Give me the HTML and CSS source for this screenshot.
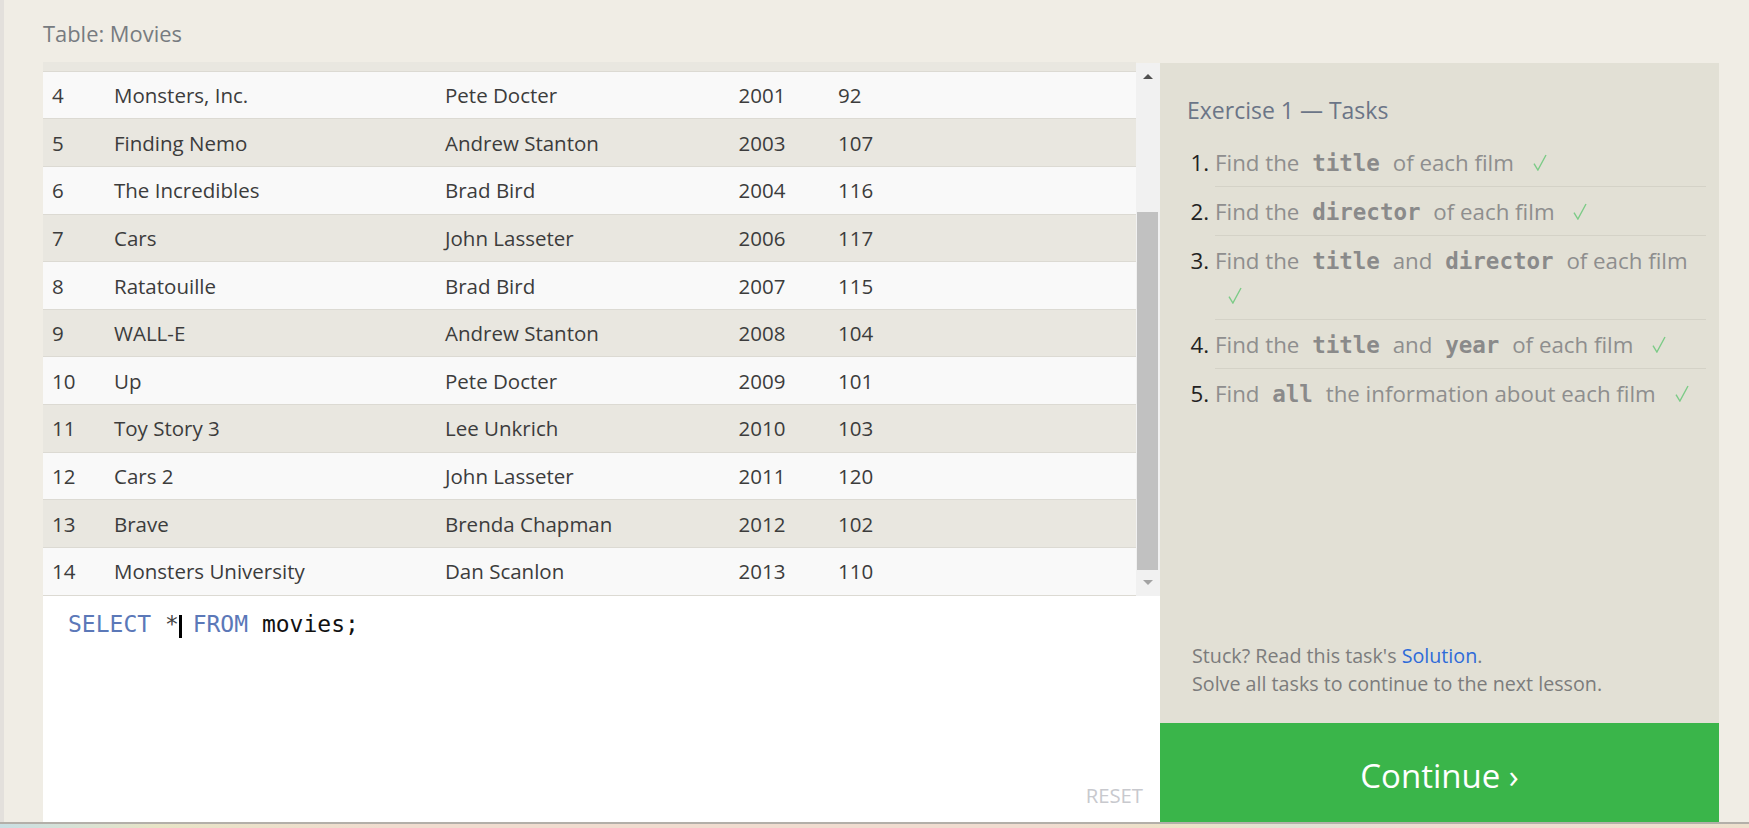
FILE: index.html
```html
<!DOCTYPE html>
<html lang="en">
<head>
<meta charset="utf-8">
<title>SQL Lesson - Movies</title>
<link rel="stylesheet" href="styles.css">
</head>
<body>
<div class="page">
  <div class="body-row">
    <div class="edge"></div>
    <div class="main">
      <div class="table-title">Table: Movies</div>
      <div class="workspace">
        <div class="left-col">
          <div class="table-wrap">
            <div class="viewport">
              <div class="row even peek"></div>
              <div class="row odd"><span>4</span><span>Monsters, Inc.</span><span>Pete Docter</span><span>2001</span><span>92</span></div>
              <div class="row even"><span>5</span><span>Finding Nemo</span><span>Andrew Stanton</span><span>2003</span><span>107</span></div>
              <div class="row odd"><span>6</span><span>The Incredibles</span><span>Brad Bird</span><span>2004</span><span>116</span></div>
              <div class="row even"><span>7</span><span>Cars</span><span>John Lasseter</span><span>2006</span><span>117</span></div>
              <div class="row odd"><span>8</span><span>Ratatouille</span><span>Brad Bird</span><span>2007</span><span>115</span></div>
              <div class="row even"><span>9</span><span>WALL-E</span><span>Andrew Stanton</span><span>2008</span><span>104</span></div>
              <div class="row odd"><span>10</span><span>Up</span><span>Pete Docter</span><span>2009</span><span>101</span></div>
              <div class="row even"><span>11</span><span>Toy Story 3</span><span>Lee Unkrich</span><span>2010</span><span>103</span></div>
              <div class="row odd"><span>12</span><span>Cars 2</span><span>John Lasseter</span><span>2011</span><span>120</span></div>
              <div class="row even"><span>13</span><span>Brave</span><span>Brenda Chapman</span><span>2012</span><span>102</span></div>
              <div class="row odd"><span>14</span><span>Monsters University</span><span>Dan Scanlon</span><span>2013</span><span>110</span></div>
            </div>
            <div class="scrollbar">
              <div class="sb-btn"><span class="arrow-up"></span></div>
              <div class="sb-track"><div class="sb-thumb"></div></div>
              <div class="sb-btn"><span class="arrow-down"></span></div>
            </div>
          </div>
          <div class="editor">
            <div class="code-line"><span class="kw">SELECT</span> <span class="op">*</span><span class="cursor"></span> <span class="kw">FROM</span> movies;</div>
            <div class="editor-foot"><span class="reset">RESET</span></div>
          </div>
        </div>
        <div class="right-col">
          <div class="tasks-panel">
            <h3 class="tasks-heading">Exercise 1 — Tasks</h3>
            <ol class="tasks">
              <li>Find the <code>title</code> of each film <span class="check"><svg width="14" height="17" viewBox="0 0 14 17"><path d="M1 9.6 L4.9 16 L13 1" fill="none" stroke="#7ccb87" stroke-width="1.4"/></svg></span></li>
              <li>Find the <code>director</code> of each film <span class="check"><svg width="14" height="17" viewBox="0 0 14 17"><path d="M1 9.6 L4.9 16 L13 1" fill="none" stroke="#7ccb87" stroke-width="1.4"/></svg></span></li>
              <li>Find the <code>title</code> and <code>director</code> of each film <span class="check"><svg width="14" height="17" viewBox="0 0 14 17"><path d="M1 9.6 L4.9 16 L13 1" fill="none" stroke="#7ccb87" stroke-width="1.4"/></svg></span></li>
              <li>Find the <code>title</code> and <code>year</code> of each film <span class="check"><svg width="14" height="17" viewBox="0 0 14 17"><path d="M1 9.6 L4.9 16 L13 1" fill="none" stroke="#7ccb87" stroke-width="1.4"/></svg></span></li>
              <li>Find <code>all</code> the information about each film <span class="check"><svg width="14" height="17" viewBox="0 0 14 17"><path d="M1 9.6 L4.9 16 L13 1" fill="none" stroke="#7ccb87" stroke-width="1.4"/></svg></span></li>
            </ol>
            <div class="stuck">
              <div>Stuck? Read this task's <a class="solution" href="#">Solution</a>.</div>
              <div>Solve all tasks to continue to the next lesson.</div>
            </div>
          </div>
          <div class="continue">Continue ›</div>
        </div>
      </div>
    </div>
  </div>
  <div class="bottom-strip"></div>
</div>
</body>
</html>
```

FILE: styles.css
```css
* { box-sizing: border-box; }
html, body { margin: 0; padding: 0; }
body {
  width: 1749px;
  height: 828px;
  overflow: hidden;
  background: #f0ede5;
  font-family: "Open Sans", "Noto Sans", sans-serif;
}
.page { display: flex; flex-direction: column; height: 828px; }
.body-row { display: flex; height: 822px; flex: none; }
.edge { width: 4px; flex: none; background: #e3e0dc; }
.main { flex: 1; padding-left: 39px; display: flex; flex-direction: column; min-width: 0; }

.table-title {
  font-size: 21.9px;
  line-height: 30px;
  color: #777b80;
  padding-top: 19px;
  margin-bottom: 13px;
  flex: none;
}

.workspace { display: flex; flex: 1; min-height: 0; }
.left-col { width: 1117px; flex: none; display: flex; flex-direction: column; }

.table-wrap { display: flex; height: 533.7px; flex: none; }
.viewport { width: 1092.5px; flex: none; overflow: hidden; }
.row {
  display: grid;
  grid-template-columns: 62px 331px 293.5px 99.5px 1fr;
  align-items: center;
  height: 47.64px;
  border-bottom: 1px solid #dcdad3;
  font-size: 20.5px;
  color: #3c3c3c;
}
.row > span { padding-left: 9px; white-space: nowrap; }
.row.odd { background: #f9f9f9; }
.row.even { background: #e9e7e0; }
.row.peek { height: 9.7px; }

.scrollbar {
  width: 24.5px;
  flex: none;
  margin-top: 1px;
  background: #f1f1f1;
  display: flex;
  flex-direction: column;
}
.sb-btn { height: 26px; flex: none; display: flex; align-items: center; justify-content: center; }
.arrow-up {
  width: 0; height: 0;
  border-left: 5.5px solid transparent;
  border-right: 5.5px solid transparent;
  border-bottom: 5.5px solid #505050;
}
.arrow-down {
  width: 0; height: 0;
  border-left: 5.5px solid transparent;
  border-right: 5.5px solid transparent;
  border-top: 5.5px solid #a3a3a3;
}
.sb-track { flex: 1; }
.sb-thumb { margin: 122.7px 2px 0 1px; height: 358px; background: #c1c1c1; }

.editor {
  flex: 1;
  background: #fff;
  display: flex;
  flex-direction: column;
  padding: 14.3px 17px 13.8px 25px;
}
.code-line {
  font-family: "DejaVu Sans Mono", "Liberation Mono", monospace;
  font-size: 23px;
  line-height: 28px;
  color: #111;
  white-space: pre;
}
.kw { color: #5b78b8; }
.op { color: #444; }
.cursor {
  display: inline-block;
  width: 0;
  height: 23px;
  border-left: 3px solid #000;
  margin-right: -3px;
  vertical-align: -6px;
}
.editor-foot { margin-top: auto; display: flex; justify-content: flex-end; }
.reset { font-size: 20.3px; line-height: 26px; color: #c8c9ce; }

.right-col { width: 559px; flex: none; margin-top: 1px; display: flex; flex-direction: column; }
.tasks-panel {
  flex: 1;
  background: #e2e0d5;
  padding: 31px 13px 25.5px 27px;
  display: flex;
  flex-direction: column;
}
.tasks-heading {
  margin: 0;
  font-weight: normal;
  font-size: 23px;
  line-height: 32px;
  color: #6b7587;
}
.tasks {
  margin: 12px 0 0;
  padding-left: 28px;
  list-style: decimal;
}
.tasks li {
  font-size: 22.3px;
  line-height: 35px;
  padding: 6.5px 0;
  border-bottom: 1px solid #d4d2c7;
  color: #8e8e8e;
}
.tasks li:last-child { border-bottom: none; }
.tasks li::marker { color: #222; }
.tasks code {
  font-family: "DejaVu Sans Mono", "Liberation Mono", monospace;
  font-weight: bold;
  font-size: 22.5px;
  line-height: 20px;
  color: #8a8a8a;
  padding: 0 7px;
}
.check { display: inline-block; margin-left: 13px; line-height: 0; }
.check svg { display: inline-block; vertical-align: baseline; }

.stuck {
  margin-top: auto;
  padding-left: 5px;
  font-size: 19.7px;
  line-height: 28px;
  color: #7c7c7c;
}
.solution { color: #2e6bd9; text-decoration: none; }

.continue {
  flex: none;
  height: 99px;
  background: #3ab54a;
  color: #fff;
  font-size: 33px;
  line-height: 40px;
  text-align: center;
  padding-top: 32.5px;
}

.bottom-strip {
  height: 6px;
  flex: none;
  border-top: 2px solid #b3afa9;
  background: linear-gradient(90deg, #c9dfe3 0, #e7e4c6 9%, #f0dccf 22%, #f0dcd0 60%, #ebe3c6 68%, #dfe2d4 74%, #f0dcd0 82%, #ede0cd 100%);
}
```
